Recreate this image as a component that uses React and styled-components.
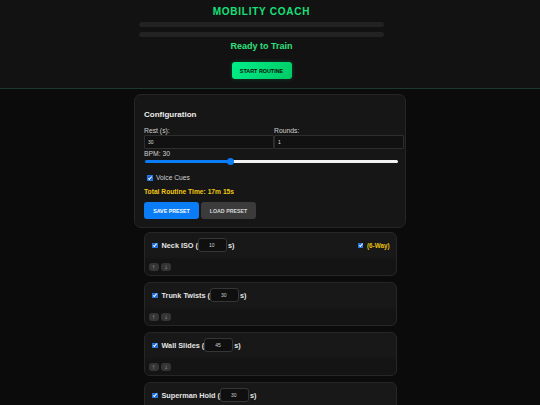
import React from "react";
import styled, { createGlobalStyle } from "styled-components";

const Global = createGlobalStyle`
  html, body { margin: 0; padding: 0; background: #0b0b0b; }
  body { font-family: "Liberation Sans", Arial, Helvetica, sans-serif; color: #e6e6e6; }
  * { box-sizing: border-box; }
`;

const Header = styled.header`
  background: #121212;
  border-bottom: 1px solid #1c3a2b;
  padding: 6px 17px 9px 0;
  display: flex;
  flex-direction: column;
  align-items: center;
`;

const Title = styled.h1`
  margin: 0;
  font-size: 10px;
  line-height: 12px;
  font-weight: 700;
  letter-spacing: 0.75px;
  color: #17e07a;
`;

const Bar = styled.div`
  width: 245px;
  height: 5px;
  border-radius: 3px;
  background: #222222;
  margin-top: ${(p) => p.$mt}px;
`;

const Status = styled.div`
  margin-top: 4px;
  font-size: 9px;
  line-height: 11px;
  font-weight: 700;
  color: #2fe07c;
`;

const StartButton = styled.button`
  margin-top: 10px;
  width: 60px;
  height: 16.5px;
  border: none;
  border-radius: 3px;
  background: linear-gradient(135deg, #00f08a, #00c964);
  color: #0a0a0a;
  font-family: inherit;
  font-size: 5.4px;
  font-weight: 700;
  padding: 0;
  box-shadow: 0 0 4px rgba(0, 230, 118, 0.25);
`;

const Main = styled.main`
  display: flex;
  flex-direction: column;
  align-items: center;
  padding-top: 5px;
`;

const ConfigCard = styled.section`
  width: 272px;
  background: #161616;
  border: 1px solid #262626;
  border-radius: 7px;
  padding: 15px 9px 8px 9px;
`;

const Heading = styled.h3`
  margin: 0 0 7.5px 0;
  font-size: 8px;
  line-height: 10px;
  font-weight: 700;
  color: #ececec;
`;

const FieldGrid = styled.div`
  display: grid;
  grid-template-columns: 130px 130px;
`;

const Field = styled.label`
  display: flex;
  flex-direction: column;
`;

const Label = styled.span`
  font-size: 6.8px;
  line-height: 8px;
  color: #cfcfcf;
`;

const BpmLabel = styled(Label).attrs({ as: "div" })`
  line-height: 7px;
  margin-top: 0.5px;
`;

const TextInput = styled.input`
  height: 14px;
  width: 100%;
  background: #111111;
  border: 1px solid #2e2e2e;
  border-radius: 1px;
  color: #dddddd;
  font-family: inherit;
  font-size: 5px;
  padding: 0 3px;
  outline: none;
`;

const Slider = styled.input`
  -webkit-appearance: none;
  appearance: none;
  display: block;
  width: 253px;
  height: 7px;
  margin: 1px 0 0 1px;
  background: transparent;
  &::-webkit-slider-runnable-track {
    height: 3px;
    border-radius: 2px;
    background: linear-gradient(
      to right,
      #0a7cf5 ${(p) => p.$pct}%,
      #f2f2f2 ${(p) => p.$pct}%
    );
  }
  &::-webkit-slider-thumb {
    -webkit-appearance: none;
    width: 7px;
    height: 7px;
    margin-top: -2px;
    border-radius: 50%;
    background: #0a7cf5;
    border: none;
  }
`;

const CheckRow = styled.label`
  display: flex;
  align-items: center;
  margin-top: 9px;
  font-size: 6.7px;
  line-height: 8px;
  color: #cfcfcf;
`;

const Check = styled.input.attrs({ type: "checkbox" })`
  -webkit-appearance: none;
  appearance: none;
  position: relative;
  flex: none;
  width: 5.5px;
  height: 5.5px;
  margin: 0 ${(p) => p.$mr ?? 3}px 0 ${(p) => p.$ml ?? 0}px;
  border-radius: 1px;
  background: #1766d6;
  box-shadow: inset 0 0 0 0.5px #3d86ea;
  &:checked::after {
    content: "";
    position: absolute;
    left: 1.9px;
    top: 0.6px;
    width: 1.3px;
    height: 2.8px;
    border: solid #ffffff;
    border-width: 0 0.8px 0.8px 0;
    transform: rotate(40deg);
  }
`;

const Total = styled.div`
  margin-top: 6px;
  font-size: 6.7px;
  line-height: 8px;
  font-weight: 700;
  color: #f2c811;
`;

const ButtonRow = styled.div`
  display: flex;
  gap: 2px;
  margin-top: 6.5px;
`;

const PresetButton = styled.button`
  width: 55px;
  height: 16.7px;
  border: none;
  border-radius: 3px;
  padding: 0;
  font-family: inherit;
  font-size: 5.3px;
  font-weight: 700;
  background: ${(p) => (p.$primary ? "#0a7cf5" : "#3b3b3b")};
  color: ${(p) => (p.$primary ? "#ffffff" : "#d6d6d6")};
`;

const List = styled.div`
  width: 253px;
  margin-top: 4.5px;
  display: flex;
  flex-direction: column;
  gap: 6px;
  padding-bottom: 20px;
`;

const ExerciseCard = styled.div`
  height: 44px;
  border: 1px solid #262626;
  border-radius: 6px;
  background: linear-gradient(to bottom, #181818 0%, #181818 55%, #141414 65%);
  padding: 5px 4px 4px 4px;
  display: flex;
  flex-direction: column;
  justify-content: space-between;
`;

const NameRow = styled.div`
  display: flex;
  align-items: center;
  justify-content: space-between;
  padding: 0 2px 0 3.5px;
`;

const NameLabel = styled.label`
  display: flex;
  align-items: center;
  font-size: 7.3px;
  font-weight: 700;
  color: #e4e4e4;
  white-space: pre;
`;

const DurInput = styled.input`
  width: 29px;
  height: 14px;
  margin: 0 1px 0 0;
  background: #0f0f0f;
  border: 1px solid #363636;
  border-radius: 3px;
  color: #d0d0d0;
  font-family: inherit;
  font-size: 5px;
  padding: 0 0 0 10px;
  outline: none;
`;

const Variant = styled.label`
  display: flex;
  align-items: center;
  font-size: 6.3px;
  font-weight: 700;
  color: #e8c40f;
`;

const Arrows = styled.div`
  display: flex;
  gap: 2.5px;
`;

const ArrowButton = styled.button`
  width: 10px;
  height: 8px;
  border: none;
  border-radius: 3px;
  background: #353535;
  color: #8a8a8a;
  font-size: 5px;
  line-height: 8px;
  padding: 0;
  font-family: "DejaVu Sans", sans-serif;
`;

const exercises = [
  { name: "Neck ISO", dur: 10, variant: "(6-Way)" },
  { name: "Trunk Twists", dur: 30 },
  { name: "Wall Slides", dur: 45 },
  { name: "Superman Hold", dur: 30 },
];

export default function App() {
  const bpm = 30;
  const pct = ((bpm - 10) / 60) * 100;
  return (
    <>
      <Global />
      <Header>
        <Title>MOBILITY COACH</Title>
        <Bar $mt={4.3} />
        <Bar $mt={5} />
        <Status>Ready to Train</Status>
        <StartButton>START ROUTINE</StartButton>
      </Header>
      <Main>
        <ConfigCard>
          <Heading>Configuration</Heading>
          <FieldGrid>
            <Field>
              <Label>Rest (s):</Label>
              <TextInput defaultValue="30" />
            </Field>
            <Field>
              <Label>Rounds:</Label>
              <TextInput defaultValue="1" />
            </Field>
          </FieldGrid>
          <BpmLabel>BPM: {bpm}</BpmLabel>
          <Slider type="range" min={10} max={70} defaultValue={bpm} $pct={pct} />
          <CheckRow>
            <Check defaultChecked $ml={3} $mr={3.5} />
            Voice Cues
          </CheckRow>
          <Total>Total Routine Time: 17m 15s</Total>
          <ButtonRow>
            <PresetButton $primary>SAVE PRESET</PresetButton>
            <PresetButton>LOAD PRESET</PresetButton>
          </ButtonRow>
        </ConfigCard>
        <List>
          {exercises.map((ex) => (
            <ExerciseCard key={ex.name}>
              <NameRow>
                <NameLabel>
                  <Check defaultChecked $mr={4} />
                  {ex.name} (
                  <DurInput defaultValue={ex.dur} />
                  s)
                </NameLabel>
                {ex.variant && (
                  <Variant>
                    <Check defaultChecked $mr={3.5} />
                    {ex.variant}
                  </Variant>
                )}
              </NameRow>
              <Arrows>
                <ArrowButton>↑</ArrowButton>
                <ArrowButton>↓</ArrowButton>
              </Arrows>
            </ExerciseCard>
          ))}
        </List>
      </Main>
    </>
  );
}
